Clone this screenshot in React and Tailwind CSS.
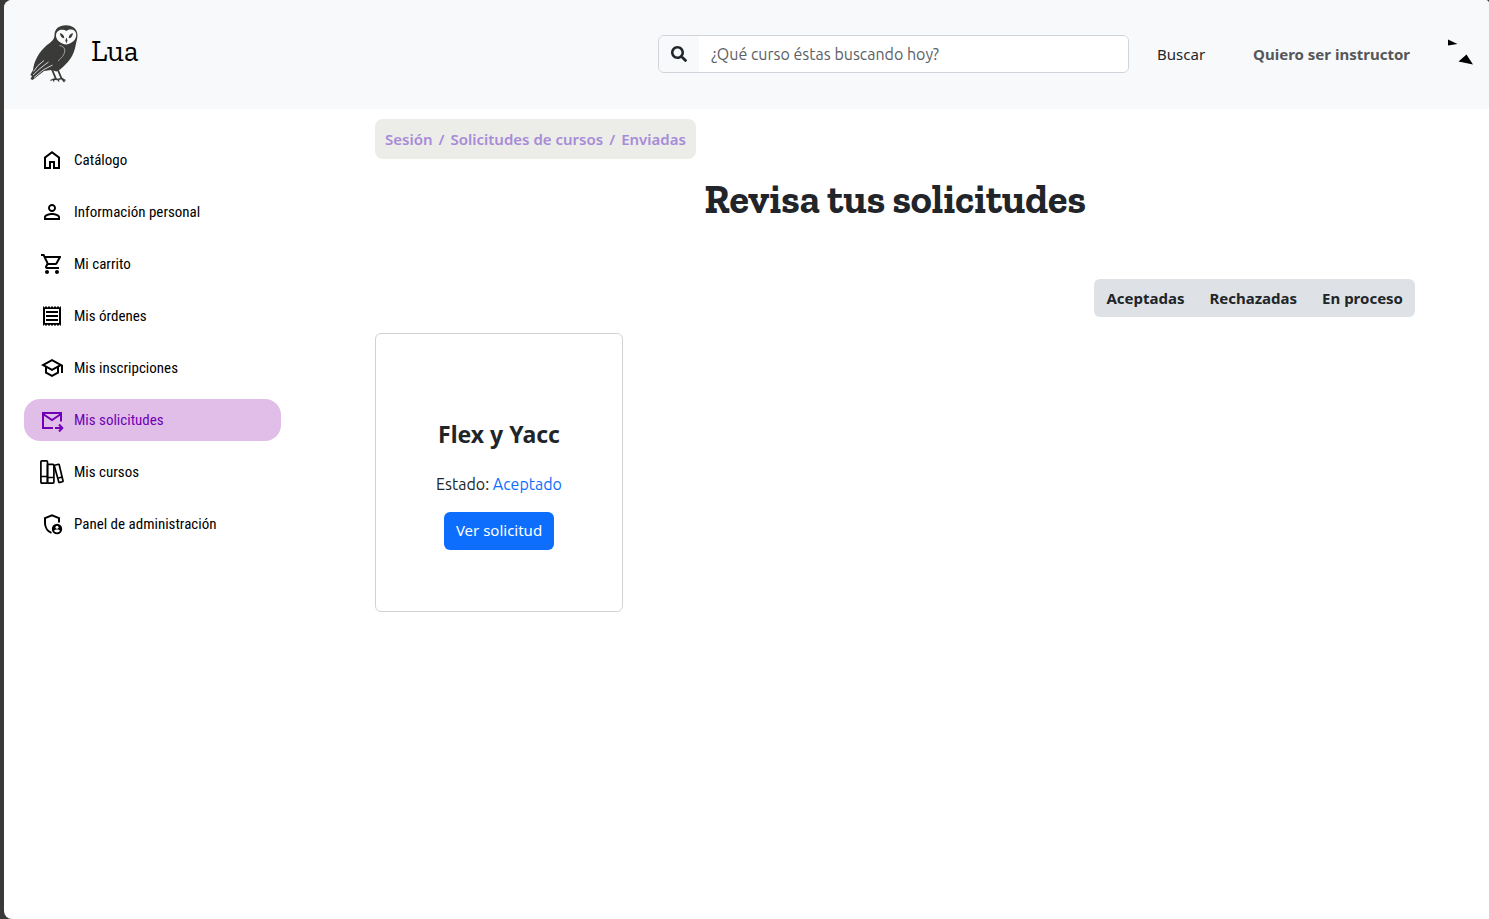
import React from 'react';
import {
  MdPersonOutline,
  MdOutlineShoppingCart,
  MdOutlineReceipt,
  MdOutlineSchool,
} from 'react-icons/md';
import { FaSearch } from 'react-icons/fa';

function OwlLogo() {
  return (
    <svg viewBox="0 0 48 58" className="h-[58px] w-12 shrink-0" aria-hidden="true">
      <path
        d="M24.500 10C24.500 4 29 .3 36 .3 43 .3 47.500 4.500 47.500 10.500 47.200 15 46 18 45.500 21 44 30 38.500 38 30 44.500L26.500 46.500 21 45 14 46 2.500 55 .5 54 2 51 .3 50 3 45C4 36 9 27 17 20 21 17 24.500 15 24.500 10Z"
        fill="#3a3a39"
      />
      <path d="M36.500 6C33 3.300 26 4.500 26 10.500 26 15 30.500 19 36.500 19.500 42 18.500 46 15 46.300 10 46.500 5 40.500 3 36.500 6Z" fill="#fbfbfc" />
      <path d="M29.800 8C32.500 8.500 34.300 10.500 34.300 13.300 32 13.300 30.300 11.500 29.800 8ZM43 8C40.300 8.500 38.700 10.500 38.700 13.300 41 13.300 42.500 11.500 43 8ZM36.400 12.500 37.500 15.500 36.400 18.500 35.300 15.500Z" fill="#3a3a39" />
      <path d="M29.500 20.500C33 21 35 23 34.800 26 34.500 30 31.500 33 28 36" fill="none" stroke="#b4b6b8" strokeWidth="0.800" />
      <path d="M14 35.500 8 40.500 3.500 46.500M18.500 37 10 43.500 3 50M22.500 40 13 45 4 52.500" fill="none" stroke="#e4e6e8" strokeWidth="0.900" />
      <path d="M22 44.500 26 54M27.500 44 31.500 53.500" stroke="#3a3a39" strokeWidth="1.900" />
      <path d="M20.500 55.500 24 54 27 54.500 32 53.500 35.500 55.500M24 54.500 23.500 56.500M28 54.500 29 56.500M32 54 34.500 57" fill="none" stroke="#3a3a39" strokeWidth="1.300" />
    </svg>
  );
}

function HomeIcon() {
  return (
    <svg viewBox="0 -960 960 960" fill="currentColor" className="h-6 w-6 shrink-0">
      <path d="M240-200h120v-240h240v240h120v-360L480-740 240-560v360Zm-80 80v-480l320-240 320 240v480H520v-240h-80v240H160Z" />
    </svg>
  );
}

function ForwardIcon() {
  return (
    <svg viewBox="0 0 24 24" fill="none" stroke="currentColor" strokeWidth="2" className="h-6 w-6 shrink-0">
      <path d="M13 20H3V5H21V13.500M3 6 12 12 21 6M15 20H22M19 16.500 22.300 20 19 23.500" />
    </svg>
  );
}

function BooksIcon() {
  return (
    <svg viewBox="0 0 24 24" fill="none" stroke="currentColor" strokeWidth="1.700" className="h-6 w-6 shrink-0">
      <rect x="0.900" y="0.900" width="6.600" height="22.200" rx="1" />
      <rect x="7.500" y="4.300" width="6.400" height="18.800" rx="1" />
      <path d="M.8 16.500H7.600M7.600 17.500H13.900M14.800 5.300 18.300 4.300Q19 4.100 19.200 4.800L23 20.700Q23.200 21.500 22.400 21.700L19.800 22.400Q19 22.600 18.800 21.900L14.400 6.200Q14.200 5.500 14.800 5.300ZM17.600 18.200 22.200 17" />
    </svg>
  );
}

function AdminIcon() {
  return (
    <svg viewBox="0 0 24 24" className="h-6 w-6 shrink-0">
      <path
        d="M19 10.500V6.200L12 3.300 5 6.200V11C5 15.500 7.800 19.500 11.500 20.900"
        fill="none"
        stroke="currentColor"
        strokeWidth="2"
      />
      <circle cx="17" cy="17" r="5.200" fill="currentColor" />
      <circle cx="17" cy="15.300" r="1.500" fill="#fff" />
      <path d="M14 18.800C14.500 17.800 16 17.500 17 17.500S19.500 17.800 20 18.800C19.300 19.800 18.200 20.400 17 20.400S14.700 19.800 14 18.800Z" fill="#fff" />
    </svg>
  );
}

function AvatarMark() {
  return (
    <svg viewBox="0 0 40 40" className="h-10 w-10" fill="#000" aria-hidden="true">
      <path d="M8 5.500 17.500 10 8 11.500ZM26.500 20.500 33 30.500 18.500 27.500Z" />
    </svg>
  );
}

const links = [
  { label: 'Catálogo', icon: <HomeIcon /> },
  { label: 'Información personal', icon: <MdPersonOutline size={24} /> },
  { label: 'Mi carrito', icon: <MdOutlineShoppingCart size={24} /> },
  { label: 'Mis órdenes', icon: <MdOutlineReceipt size={24} /> },
  { label: 'Mis inscripciones', icon: <MdOutlineSchool size={24} /> },
  { label: 'Mis solicitudes', icon: <ForwardIcon />, active: true },
  { label: 'Mis cursos', icon: <BooksIcon /> },
  { label: 'Panel de administración', icon: <AdminIcon /> },
];

const crumbs = ['Sesión', 'Solicitudes de cursos', 'Enviadas'];
const filters = ['Aceptadas', 'Rechazadas', 'En proceso'];

export default function App() {
  return (
    <div className="flex min-h-screen bg-[#3a3937] pl-1 font-['Noto_Sans',sans-serif] text-[#212529]">
      <div className="flex min-w-0 grow flex-col overflow-hidden rounded-l-lg rounded-tr-sm bg-white">
        <header className="flex items-center bg-[#f8f9fb] pt-[25px] pr-[9px] pb-[26px] pl-[26px]">
          <a href="#inicio" className="flex items-center gap-[13px] text-black">
            <OwlLogo />
            <span className="pb-1.5 font-['Zilla_Slab','DejaVu_Serif_Condensed','DejaVu_Serif',serif] text-[30px] leading-8">Lua</span>
          </a>
          <form className="ml-auto flex items-center" onSubmit={(e) => e.preventDefault()}>
            <div className="flex h-[38px] w-[471px] overflow-hidden rounded-md border border-[#ced4da]">
              <label htmlFor="buscador" className="flex w-10 shrink-0 items-center justify-center bg-[#f8f9fb]">
                <FaSearch size={16} />
              </label>
              <input
                id="buscador"
                type="text"
                aria-label="Buscar curso"
                placeholder="¿Qué curso éstas buscando hoy?"
                className="min-w-0 grow bg-white px-3 font-['Ubuntu','Noto_Sans',sans-serif] text-base outline-none placeholder:text-[#5c6166]"
              />
            </div>
            <button type="submit" className="ml-4 px-3 text-[15px] leading-6">Buscar</button>
          </form>
          <a href="#instructor" className="ml-9 text-[15px] leading-6 font-bold text-[#555759]">Quiero ser instructor</a>
          <button type="button" aria-label="Perfil" className="ml-[30px]">
            <AvatarMark />
          </button>
        </header>

        <div className="flex grow">
          <nav className="flex w-[277px] shrink-0 flex-col gap-2.5 pt-[30px] pl-5">
            {links.map((l) => (
              <a
                key={l.label}
                href="#seccion"
                className={
                  l.active
                    ? 'flex h-[42px] items-center gap-2.5 rounded-2xl bg-[#e1bee7] pl-4 text-[#6f00b8]'
                    : 'flex h-[42px] items-center gap-2.5 rounded-2xl pl-4 text-black'
                }
              >
                {l.icon}
                <span className="font-['Roboto_Condensed','Open_Sans_Condensed',sans-serif] text-[15px] leading-6">{l.label}</span>
              </a>
            ))}
          </nav>

          <main className="flex min-w-0 grow flex-col pt-2.5 pr-[74px] pl-[94px]">
            <nav aria-label="Ruta" className="flex h-10 items-center gap-1.5 self-start rounded-lg bg-[#ecede8] px-2.5 text-[15px] font-semibold text-[#a78bd8]">
              {crumbs.map((c, i) => (
                <React.Fragment key={c}>
                  {i > 0 && <span>/</span>}
                  <a href="#ruta">{c}</a>
                </React.Fragment>
              ))}
            </nav>
            <h1 className="mt-4 text-center font-['Zilla_Slab','DejaVu_Serif_Condensed','DejaVu_Serif',serif] text-[40px] leading-12 font-bold">
              Revisa tus solicitudes
            </h1>
            <div className="mt-14 flex h-[38px] gap-px self-end rounded-md bg-[#dee2e6] text-[15px] font-bold">
              {filters.map((f) => (
                <button key={f} type="button" className="px-3">{f}</button>
              ))}
            </div>
            <section className="mt-4 flex h-[279px] w-[248px] flex-col items-center justify-center rounded-md border border-[#d0d2d4]">
              <h2 className="mt-[22px] text-[23px] leading-8 font-bold">Flex y Yacc</h2>
              <p className="mt-[22px] font-['Ubuntu','Noto_Sans',sans-serif] text-base leading-6">
                Estado: <span className="text-[#0d6efd]">Aceptado</span>
              </p>
              <button type="button" className="mt-4 h-[38px] rounded-md bg-[#0d6efd] px-3 text-[15px] text-white">
                Ver solicitud
              </button>
            </section>
          </main>
        </div>
      </div>
    </div>
  );
}
